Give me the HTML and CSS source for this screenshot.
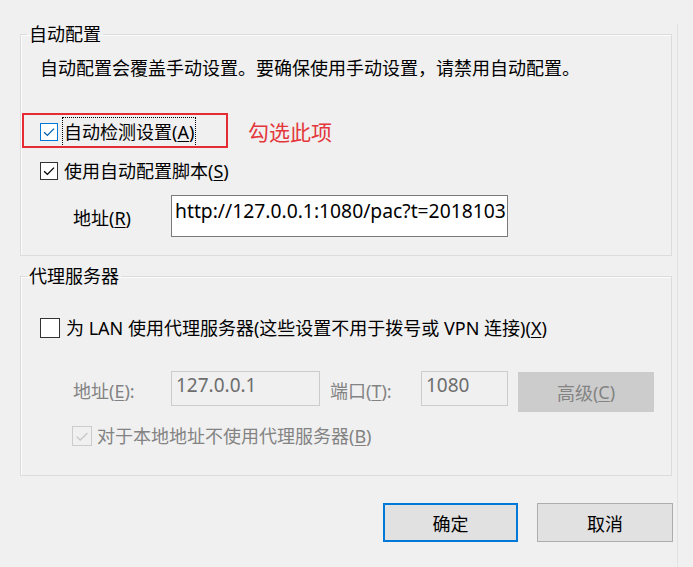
FILE: index.html
```html
<!DOCTYPE html>
<html lang="zh-CN">
<head>
<meta charset="utf-8">
<title>局域网设置</title>
<link rel="stylesheet" href="styles.css">
</head>
<body>
<div class="dialog">
  <fieldset class="group group-auto">
    <legend class="legend">自动配置</legend>
    <p class="desc">自动配置会覆盖手动设置。要确保使用手动设置，请禁用自动配置。</p>
    <div class="check-row row-first">
      <span class="box box-focus"><svg viewBox="0 0 18 18" width="18" height="18"><path d="M3.5 9.2 L7.2 12.8 L14.6 5.2" fill="none" stroke="#0063b1" stroke-width="1.5"/></svg></span>
      <span class="label focus">自动检测设置(<u>A</u>)</span>
      <span class="annot-box"></span>
      <span class="annot-text">勾选此项</span>
    </div>
    <div class="check-row row-second">
      <span class="box"><svg viewBox="0 0 18 18" width="18" height="18"><path d="M3.5 9.2 L7.2 12.8 L14.6 5.2" fill="none" stroke="#000" stroke-width="1.5"/></svg></span>
      <span class="label">使用自动配置脚本(<u>S</u>)</span>
    </div>
    <div class="addr-row">
      <span class="addr-label">地址(<u>R</u>)</span>
      <div class="text-input">http://127.0.0.1:1080/pac?t=201810311</div>
    </div>
  </fieldset>

  <fieldset class="group group-proxy">
    <legend class="legend">代理服务器</legend>
    <div class="check-row row-lan">
      <span class="box box-big"></span>
      <span class="label">为 LAN 使用代理服务器(这些设置不用于拨号或 VPN 连接)(<u>X</u>)</span>
    </div>
    <div class="proxy-row">
      <span class="dis-label lbl-addr">地址(<u>E</u>):</span>
      <div class="dis-input in-addr">127.0.0.1</div>
      <span class="dis-label lbl-port">端口(<u>T</u>):</span>
      <div class="dis-input in-port">1080</div>
      <div class="btn-adv">高级(<u>C</u>)</div>
    </div>
    <div class="check-row row-local">
      <span class="box box-dis"><svg viewBox="0 0 20 20" width="19" height="19"><path d="M4 10 L8 14 L16 6" fill="none" stroke="#c8c8c8" stroke-width="1.5"/></svg></span>
      <span class="label label-dis">对于本地地址不使用代理服务器(<u>B</u>)</span>
    </div>
  </fieldset>

  <div class="buttons">
    <div class="btn btn-ok">确定</div>
    <div class="btn btn-cancel">取消</div>
  </div>
</div>
</body>
</html>
```

FILE: styles.css
```css
html, body {
  margin: 0;
  padding: 0;
  background: #f0f0f0;
}
body {
  font-family: "Noto Sans", "Noto Sans CJK SC", sans-serif;
  font-size: 18px;
  color: #000;
  width: 693px;
  height: 567px;
  overflow: hidden;
}
.dialog {
  width: 657px;
  padding-left: 20px;
  height: 567px;
  border-right: 1px solid #e2e2e2;
  box-sizing: content-box;
}
u { text-decoration: underline; text-underline-offset: 2px; text-decoration-thickness: 1px; }

.group {
  margin: 0;
  padding: 0 0 0 19px;
  border: 1px solid #dcdcdc;
  box-shadow: inset 1px 1px 0 #fbfbfb;
  width: 652px;
  box-sizing: border-box;
  min-width: 0;
}
.group-auto { margin-top: 24px; padding-bottom: 18px; }
.group-proxy { margin-top: 10px; padding-bottom: 25px; }
.legend {
  padding: 0 2px;
  margin-left: -13px;
  line-height: 20px;
  height: 20px;
  margin-bottom: 0;
}
.desc {
  margin: 12px 0 0 0;
  line-height: 24px;
  height: 24px;
  white-space: nowrap;
}
.check-row {
  position: relative;
  display: flex;
  align-items: center;
  height: 28px;
}
.row-first { margin-top: 38px; }
.row-second { margin-top: 11px; }
.box {
  width: 18px;
  height: 18px;
  border: 1px solid #333;
  box-sizing: border-box;
  background: #fff;
  display: flex;
  align-items: center;
  justify-content: center;
  flex: none;
}
.box svg { display: block; }
.box-focus { border-color: #0078d7; }
.label {
  margin-left: 6px;
  line-height: 24px;
  white-space: nowrap;
}
.focus {
  outline: 1px dotted #000;
  outline-offset: 0;
  padding: 2px 1px;
  margin-left: 5px;
}
.annot-box {
  position: absolute;
  left: -18px;
  top: -5px;
  width: 206px;
  height: 35px;
  border: 2px solid #e62b35;
  box-sizing: border-box;
}
.annot-text {
  position: absolute;
  left: 208px;
  top: 0;
  line-height: 28px;
  font-size: 21px;
  color: #e4373b;
  white-space: nowrap;
}
.addr-row {
  display: flex;
  align-items: center;
  margin-top: 10px;
  height: 42px;
}
.addr-label {
  margin-left: 33px;
  width: 98px;
  line-height: 24px;
  padding-top: 3px;
}
.text-input {
  width: 337px;
  height: 42px;
  box-sizing: border-box;
  border: 1px solid #7a7a7a;
  background: #fff;
  padding: 2px 0 0 3px;
  font-size: 19.3px;
  line-height: 26px;
  white-space: nowrap;
  overflow: hidden;
}

.row-lan { margin-top: 28px; }
.box-big { width: 20px; height: 20px; }
.proxy-row {
  display: flex;
  align-items: flex-start;
  margin-top: 29px;
  height: 41px;
}
.dis-label {
  color: #838383;
  line-height: 24px;
  margin-top: 8px;
  white-space: nowrap;
}
.lbl-addr { margin-left: 33px; width: 98px; }
.lbl-port { margin-left: 10px; width: 91px; }
.dis-input {
  height: 35px;
  box-sizing: border-box;
  border: 1px solid #cccccc;
  background: #f0f0f0;
  color: #6d6d6d;
  font-size: 19px;
  line-height: 26px;
  padding: 0 0 0 4px;
  white-space: nowrap;
}
.in-addr { width: 149px; }
.in-port { width: 87px; }
.btn-adv {
  margin-left: 10px;
  margin-top: 1px;
  width: 136px;
  height: 40px;
  background: #cccccc;
  color: #838383;
  display: flex;
  align-items: center;
  justify-content: center;
}
.row-local { margin-top: 10px; margin-left: 32px; }
.box-dis {
  width: 20px;
  height: 20px;
  border-color: #cccccc;
  background: #f0f0f0;
}
.label-dis { color: #838383; margin-left: 5px; }

.buttons {
  display: flex;
  justify-content: flex-end;
  gap: 19px;
  width: 653px;
  margin-top: 27px;
}
.btn {
  width: 136px;
  height: 39px;
  box-sizing: border-box;
  background: #e1e1e1;
  border: 1px solid #adadad;
  display: flex;
  align-items: center;
  justify-content: center;
}
.btn-ok { width: 135px; border: 2px solid #0078d7; }
```
